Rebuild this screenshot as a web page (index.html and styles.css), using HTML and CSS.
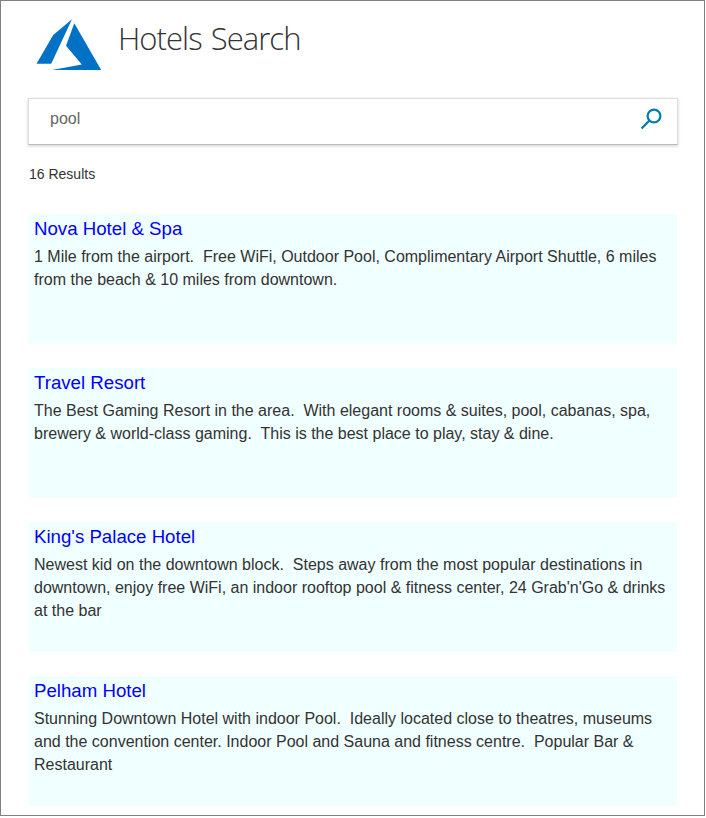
FILE: index.html
```html
<!DOCTYPE html>
<html lang="en">
<head>
<meta charset="utf-8">
<title>Hotels Search</title>
<link rel="stylesheet" href="styles.css">
</head>
<body>
<main class="page">
  <header class="header">
    <svg class="logo" viewBox="0 0 66 52" aria-hidden="true">
      <path d="M36 .2 17.2 16.1.5 44.7H15.2Z"/>
      <path d="M38.3 4.2 30 26.7 45.8 45.6 16 50.9H65.2Z"/>
    </svg>
    <h1 class="title">Hotels Search</h1>
  </header>
  <form class="search">
    <input class="search-input" type="text" value="pool" aria-label="Search">
    <svg class="search-icon" viewBox="0 0 22 22" aria-hidden="true">
      <circle cx="14" cy="8" r="6.4"/>
      <path d="M9.6 12.4 1.5 20.5"/>
    </svg>
  </form>
  <p class="count">16 Results</p>
  <section class="results">
    <article class="card">
      <h2 class="name">Nova Hotel &amp; Spa</h2>
      <p class="text">1 Mile from the airport.&nbsp; Free WiFi, Outdoor Pool, Complimentary Airport Shuttle, 6 miles<br>from the beach &amp; 10 miles from downtown.</p>
    </article>
    <article class="card">
      <h2 class="name">Travel Resort</h2>
      <p class="text">The Best Gaming Resort in the area.&nbsp; With elegant rooms &amp; suites, pool, cabanas, spa,<br>brewery &amp; world-class gaming.&nbsp; This is the best place to play, stay &amp; dine.</p>
    </article>
    <article class="card">
      <h2 class="name">King's Palace Hotel</h2>
      <p class="text">Newest kid on the downtown block.&nbsp; Steps away from the most popular destinations in<br>downtown, enjoy free WiFi, an indoor rooftop pool &amp; fitness center, 24 Grab'n'Go &amp; drinks<br>at the bar</p>
    </article>
    <article class="card">
      <h2 class="name">Pelham Hotel</h2>
      <p class="text">Stunning Downtown Hotel with indoor Pool.&nbsp; Ideally located close to theatres, museums<br>and the convention center. Indoor Pool and Sauna and fitness centre.&nbsp; Popular Bar &amp;<br>Restaurant</p>
    </article>
  </section>
</main>
</body>
</html>
```

FILE: styles.css
```css
* { box-sizing: border-box; }
body {
  margin: 0;
  background: #fff;
  color: #333;
  font-family: "Liberation Sans", Arial, sans-serif;
}
h1, h2, p { margin: 0; font-weight: 400; }
.page {
  width: 705px;
  height: 816px;
  padding: 18px 26px 0 28px;
  border: 1px solid #808080;
  overflow: hidden;
}
.header {
  display: flex;
  height: 79px;
  padding-left: 7px;
}
.logo { width: 66px; height: 52px; fill: #0072c6; }
.title {
  margin-left: 16px;
  font: 300 31px/38px "Open Sans", sans-serif;
  letter-spacing: -0.95px;
  word-spacing: 2px;
  white-space: nowrap;
}
.search {
  display: flex;
  width: 650px;
  height: 47px;
  margin-left: -1px;
  padding: 0 15px 0 21px;
  border: 1px solid #ddd;
  border-bottom-color: #bbb;
  box-shadow: 0 1px 3px rgba(0, 0, 0, 0.2);
}
.search-input {
  flex: 1;
  height: 40px;
  padding: 0;
  border: 0;
  outline: 0;
  background: none;
  color: #666;
  font: 16px/40px "Liberation Sans", Arial, sans-serif;
}
.search-icon {
  width: 22px;
  height: 22px;
  margin-top: 9px;
  fill: none;
  stroke: #007daa;
  stroke-width: 2.2;
}
.count {
  padding-top: 19px;
  font-size: 14px;
  line-height: 20px;
}
.results { display: grid; gap: 24px; margin-top: 30px; }
.card {
  width: 648px;
  height: 130px;
  padding: 3px 5px 0;
  background: #f0ffff;
}
.name { color: #00f; font-size: 18.66px; line-height: 24px; white-space: nowrap; }
.text { margin-top: 4px; font-size: 16px; line-height: 23px; white-space: nowrap; }
```
